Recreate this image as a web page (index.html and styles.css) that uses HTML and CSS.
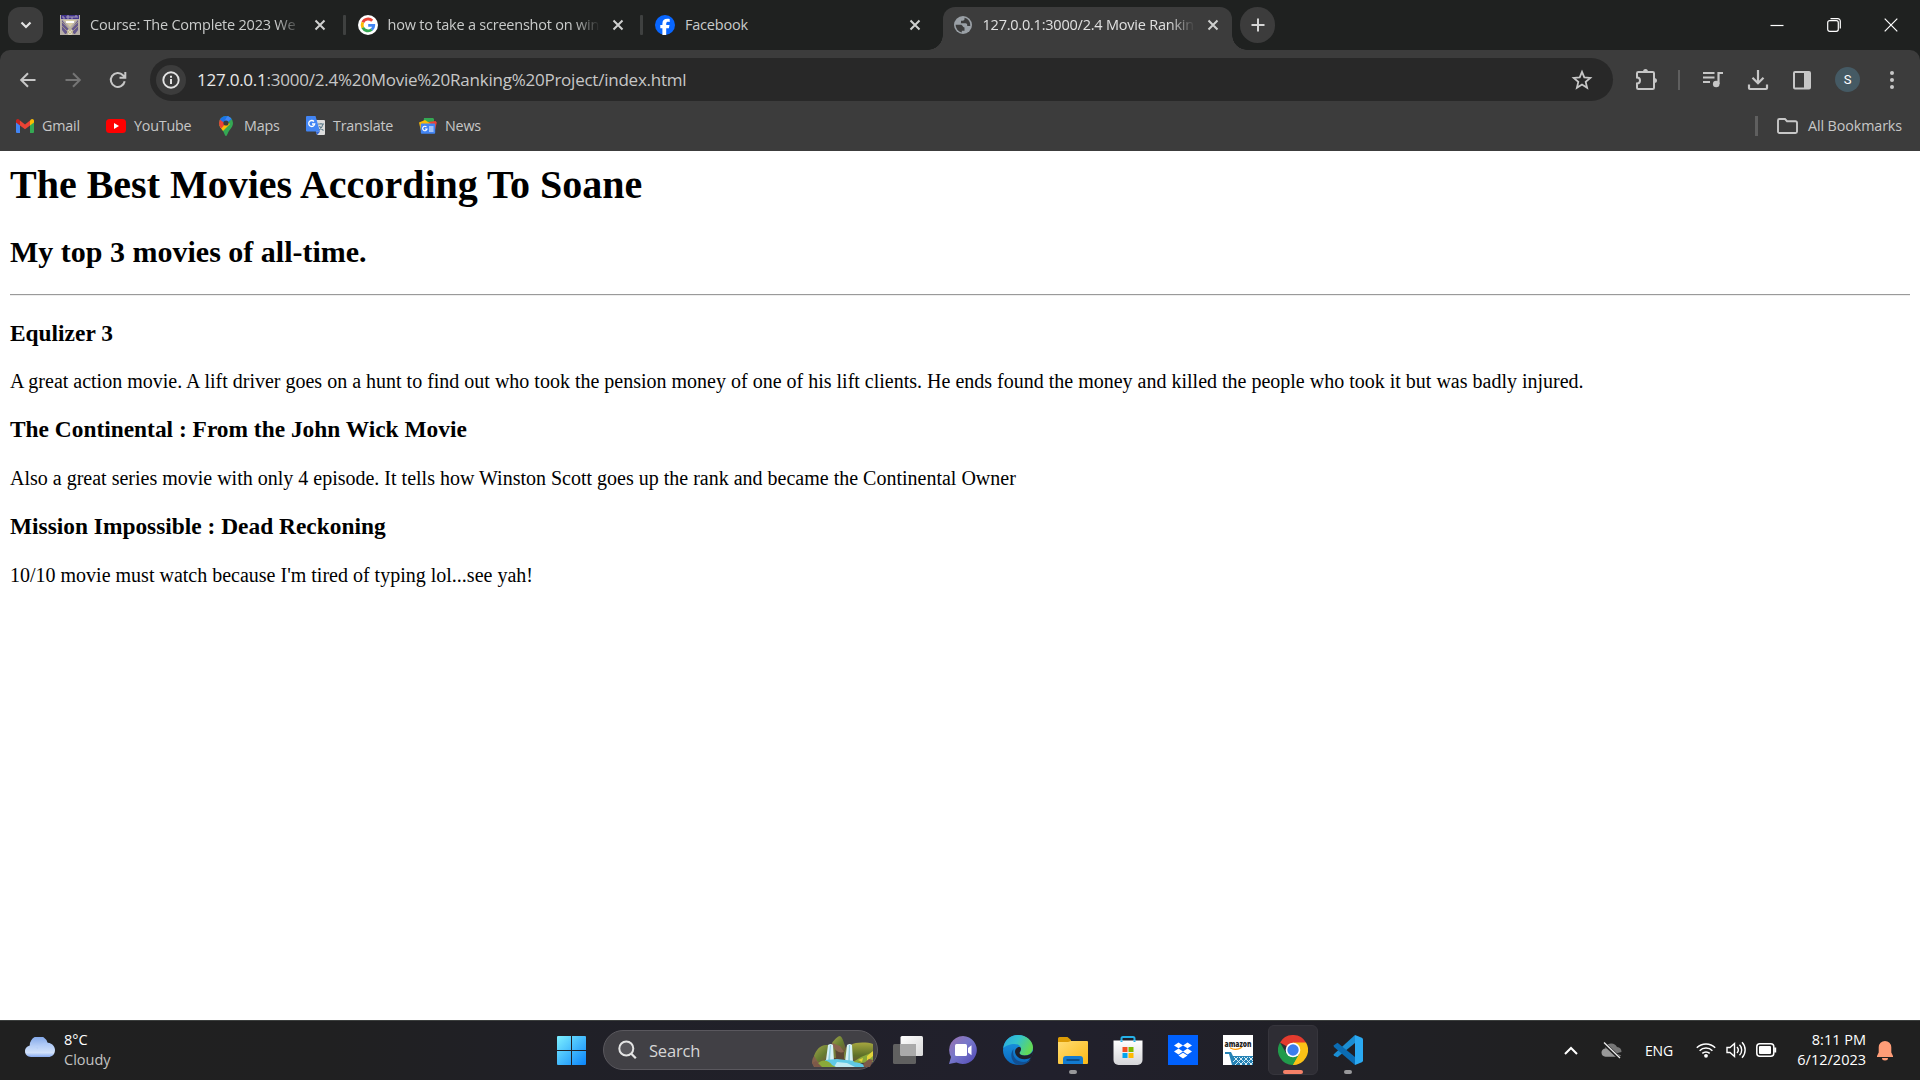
FILE: index.html
```html
<!DOCTYPE html>
<html lang="en">
<head>
<meta charset="utf-8">
<title>Movie Ranking Project</title>
<link rel="stylesheet" href="styles.css">
</head>
<body>
<div class="screen">
<header class="browser">
  <div class="tabstrip">
    <button class="tab-search"><svg width="14" height="14" viewBox="0 0 14 14"><path d="M2.500 4.500 7 9l4.500-4.500" fill="none" stroke="#e3e3e3" stroke-width="2.200"/></svg></button>
    <div class="tab">
      <svg class="fav" viewBox="0 0 20 20"><path fill="#b8b0a8" d="M0 0h20v20H0z"/><path fill="#43358c" d="M1 0h18v4H1z"/><path d="M3 1v2h2M7 1h2v2H7zM11 1v2h2V1M15 3V1h2v2" stroke="#aaa0bb" fill="none"/><path d="M2 5l7 9v5H5L2 15zM18 5l-7 9v5h4l3-4z" fill="#66598d"/><path d="M4 5h12l-6 7z" fill="#d7cda5"/><path d="M6 6h8v2H6z" fill="#fff"/><circle cx="10" cy="17" r="3" fill="#ded8bd"/><path d="M2 7l12 12M2 11l8 8M18 7 6 19M18 11l-8 8" stroke="#b4a982" stroke-width=".7"/></svg>
      <span class="tab-title fade">Course: The Complete 2023 We</span>
      <svg class="x" viewBox="0 0 12 12"><path d="M1.500 1.500l9 9M10.500 1.500l-9 9"/></svg>
    </div>
    <div class="tab">
      <svg class="fav" viewBox="0 0 20 20"><circle cx="10" cy="10" r="10" fill="#fff"/><g fill="none" stroke-width="2.900"><path d="M14.200 5.800A5.800 5.800 0 0 0 4.800 7.400" stroke="#ea4335"/><path d="M4.800 7.300a5.800 5.800 0 0 0 0 5.400" stroke="#fbbc05"/><path d="M4.800 12.600a5.800 5.800 0 0 0 9 1.900" stroke="#34a853"/><path d="M13.700 14.600c1.300-1.100 2-2.500 2-4.200H10.200" stroke="#4285f4"/></g></svg>
      <span class="tab-title fade">how to take a screenshot on win</span>
      <svg class="x" viewBox="0 0 12 12"><path d="M1.500 1.500l9 9M10.500 1.500l-9 9"/></svg>
    </div>
    <div class="tab last">
      <svg class="fav" viewBox="0 0 20 20"><circle cx="10" cy="10" r="10" fill="#0866ff"/><path fill="#fff" d="M7.400 20v-6.800H5.300v-3.100h2.100V8.800c0-3.500 1.600-5.100 5-5.100.7 0 1.800.1 2.300.3v2.900l-1.200-.1c-1.700 0-2.300.6-2.300 2.300v1h3.300l-.6 3.100h-2.700V20z"/></svg>
      <span class="tab-title">Facebook</span>
      <svg class="x" viewBox="0 0 12 12"><path d="M1.500 1.500l9 9M10.500 1.500l-9 9"/></svg>
    </div>
    <div class="tab active">
      <svg class="fav" viewBox="0 0 20 20"><circle cx="10" cy="10" r="9" fill="#9aa0a6"/><path d="M2.600 9.800h5.100c1.900 0 1.900 2.700 3.800 2.700v3.300H8.800v1.600A7.500 7.500 0 0 1 2.600 9.800z" fill="#3c3c3c"/><path d="M11.500 2.700V4c0 1-.8 1.700-1.800 1.700H8v1.700c0 .6-.4.900-1 .9h5.600c1 0 1.600.8 1.600 1.700v.9h3.100a7.500 7.500 0 0 0-5.800-8.200z" fill="#3c3c3c"/></svg>
      <span class="tab-title fade">127.0.0.1:3000/2.4 Movie Rankin</span>
      <svg class="x" viewBox="0 0 12 12"><path d="M1.500 1.500l9 9M10.500 1.500l-9 9"/></svg>
    </div>
    <button class="new-tab"><svg width="14" height="14" viewBox="0 0 14 14"><path d="M7 .5v13M.5 7h13" stroke="#d5d5d5" stroke-width="2"/></svg></button>
    <div class="window-controls">
      <svg viewBox="0 0 14 14"><path d="M.5 7.500h13"/></svg>
      <svg viewBox="0 0 14 14"><rect x=".7" y="2.700" width="10.600" height="10.600" rx="2"/><path d="M3.500.7h7.300a2.500 2.500 0 0 1 2.500 2.500v7.300"/></svg>
      <svg viewBox="0 0 14 14"><path d="M.7.7l12.600 12.600M13.300.7.7 13.300"/></svg>
    </div>
  </div>
  <div class="toolbar">
    <div class="nav">
      <svg viewBox="0 0 20 20"><path d="M17.500 10H4M10 3.200 3.200 10l6.800 6.800" stroke="#c7c7c7"/></svg>
      <svg viewBox="0 0 20 20"><path d="M2.500 10H16M10 3.200l6.800 6.800-6.800 6.800" stroke="#757575"/></svg>
      <svg viewBox="0 0 20 20"><path d="M16.700 11.300A7 7 0 1 1 15 5.200l2 2M17.300 2v5.800h-5.800" stroke="#c7c7c7"/></svg>
    </div>
    <div class="omnibox">
      <span class="site-info"><svg width="20" height="20" viewBox="0 0 20 20"><circle cx="10" cy="10" r="7.700" fill="none" stroke="#e3e3e3" stroke-width="1.900"/><path d="M10 9v5M10 5.700v2" stroke="#e3e3e3" stroke-width="2"/></svg></span>
      <span class="url"><b>127.0.0.1</b>:3000/2.4%20Movie%20Ranking%20Project/index.html</span>
      <svg class="star" width="22" height="22" viewBox="0 0 22 22"><path d="M11 2.800l2.300 5.600 6 .5-4.600 4 1.400 5.900-5.100-3.200-5.100 3.200 1.400-5.900-4.600-4 6-.5z" fill="none" stroke="#c7c7c7" stroke-width="1.800"/></svg>
    </div>
    <div class="actions">
      <svg class="puzzle" viewBox="0 0 24 24"><path d="M4.300 5h14.400a1.300 1.300 0 0 1 1.300 1.300v14.400a1.300 1.300 0 0 1-1.300 1.300H4.300A1.300 1.300 0 0 1 3 20.700v-4.200a3 3 0 0 0 0-6V6.300A1.300 1.300 0 0 1 4.300 5z" fill="none" stroke="#c7c7c7" stroke-width="2"/><path d="M9 5a2.500 3 0 0 1 5 0zM20 11a3 2.500 0 0 1 0 5z" fill="#c7c7c7"/></svg>
      <i class="rule"></i>
      <svg class="a-list" viewBox="0 0 24 24"><path d="M2 5h11.500M2 9.500h11.500M2 14h7" stroke="#c7c7c7" stroke-width="2"/><circle cx="15.200" cy="16" r="3.300" fill="#c7c7c7"/><path d="M17.500 16V5H22" fill="none" stroke="#c7c7c7" stroke-width="2.200"/></svg>
      <svg class="a-down" viewBox="0 0 24 24"><path d="M12 2v13M6.500 9.800l5.500 5.500 5.500-5.500M3 16.500V20c0 .7.400 1 1 1h16c.6 0 1-.3 1-1v-3.500" fill="none" stroke="#c7c7c7" stroke-width="2.200"/></svg>
      <svg class="a-side" viewBox="0 0 24 24"><rect x="4" y="4" width="16" height="16.500" rx="1" fill="none" stroke="#c7c7c7" stroke-width="2"/><path fill="#c7c7c7" d="M14 4h6v16h-6z"/></svg>
      <span class="avatar">S</span>
      <svg class="a-dots" viewBox="0 0 24 24" fill="#c7c7c7"><circle cx="12" cy="5" r="2"/><circle cx="12" cy="12" r="2"/><circle cx="12" cy="19" r="2"/></svg>
    </div>
  </div>
  <div class="bookmarks">
    <a class="bm gmail"><svg width="18" height="14" viewBox="0 0 18 14"><path fill="#4285f4" d="M0 3h4v11H1a1 1 0 0 1-1-1z"/><path fill="#34a853" d="M14 3h4v10a1 1 0 0 1-1 1h-3z"/><path fill="#ea4335" d="M4 1.500 9 5.400l5-3.900v5L9 10.300 4 6.500z"/><path fill="#c5221f" d="M0 2C0 .2 2-.5 3.300.7L4 1.400v5.100L0 3.600z"/><path fill="#fbbc04" d="M18 2c0-1.800-2-2.500-3.300-1.300l-.7.7v5.100l4-2.900z"/></svg><span>Gmail</span></a>
    <a class="bm youtube"><svg width="20" height="14" viewBox="0 0 20 14"><rect width="20" height="14" rx="3.500" fill="#f00"/><path fill="#fff" d="M8 4v6l5-3z"/></svg><span>YouTube</span></a>
    <a class="bm maps"><svg width="14" height="20" viewBox="0 0 14 20"><clipPath id="pin"><path d="M7 0a7 7 0 0 1 7 7c0 3-1.500 4.500-3.500 7.300C8.500 17 8.300 20 7 20s-1.500-3-3.500-5.700C1.500 11.500 0 10 0 7a7 7 0 0 1 7-7z"/></clipPath><g clip-path="url(#pin)"><path fill="#34a853" d="M0 0h14v20H0z"/><path fill="#fbbc04" d="M0 10 5 4l6 4-8 8z"/><path fill="#ea4335" d="M0 1 7 7l-5.500 6.500L0 12z"/><path fill="#1a73e8" d="M0 3 3-1h6l4 4-6 5z"/><path fill="#4285f4" d="M8 7l4.500-5L9-1 5 6z"/></g><circle cx="7" cy="7" r="2.600" fill="#3c3c3c"/></svg><span>Maps</span></a>
    <a class="bm translate"><svg width="20" height="20" viewBox="0 0 20 20"><path fill="#ddd" d="M7 4h11a1 1 0 0 1 1 1v13a1 1 0 0 1-1 1h-7z"/><path d="M12 8h6M15 7v1M17 8c-.5 3-2 4.500-4 6M13.500 10c.8 2 2 3.500 4 4.500" fill="none" stroke="#607d8b" stroke-width="1.200"/><path fill="#4285f4" d="M1 0h8.500L14 15.500H1a1 1 0 0 1-1-1V1a1 1 0 0 1 1-1z"/><path fill="#3367d6" d="M9.500 15.500H14L11.200 19z"/><path d="M8 5.500a3 3 0 1 0 .7 2.500H6" fill="none" stroke="#fff" stroke-width="1.300"/></svg><span>Translate</span></a>
    <a class="bm news"><svg width="18" height="16" viewBox="0 0 18 16"><path fill="#34a853" d="M5 0h9l1 1v8H4z"/><path fill="#ea4335" d="M9 4l7.500-1 1.300 1.500L16 12H9z"/><path fill="#fbbc04" d="M0 4.500 6 2l6 4-8 7H2z"/><path fill="#4285f4" d="M2.800 5.500h12.400a1 1 0 0 1 1 1v8.300a1 1 0 0 1-1 1H2.800a1 1 0 0 1-1-1V6.500a1 1 0 0 1 1-1z"/><path d="M7.500 9a2.200 2.200 0 1 0 .5 2H6M10 9h4.500M10 11h4.500M10 13h4.500" fill="none" stroke="#fff" stroke-width="1.100"/></svg><span>News</span></a>
    <i class="rule"></i>
    <a class="bm all"><svg width="21" height="16" viewBox="0 0 21 16"><path d="M2.500 1H8l2 2.200h8.500A1.500 1.500 0 0 1 20 4.700v8.800a1.500 1.500 0 0 1-1.500 1.500h-16A1.500 1.500 0 0 1 1 13.500v-11A1.500 1.500 0 0 1 2.500 1z" fill="none" stroke="#c7c7c7" stroke-width="1.900"/></svg><span>All Bookmarks</span></a>
  </div>
</header>

<main class="page">
  <h1>The Best Movies According To Soane</h1>
  <h2>My top 3 movies of all-time.</h2>
  <hr>
  <h3>Equlizer 3</h3>
  <p>A great action movie. A lift driver goes on a hunt to find out who took the pension money of one of his lift clients. He ends found the money and killed the people who took it but was badly injured.</p>
  <h3>The Continental : From the John Wick Movie</h3>
  <p>Also a great series movie with only 4 episode. It tells how Winston Scott goes up the rank and became the Continental Owner</p>
  <h3>Mission Impossible : Dead Reckoning</h3>
  <p>10/10 movie must watch because I'm tired of typing lol...see yah!</p>
</main>

<footer class="taskbar">
  <div class="weather">
    <svg width="30" height="20" viewBox="0 0 30 20"><defs><linearGradient id="cl" x2="0" y2="1"><stop stop-color="#7fa5e8"/><stop offset=".5" stop-color="#b9d0f7"/><stop offset="1" stop-color="#a5c2f5"/></linearGradient><linearGradient id="cl2" x2="0" y2="1"><stop stop-color="#a6c3f5"/><stop offset=".7" stop-color="#d2e2fb"/><stop offset="1" stop-color="#86aaf0"/></linearGradient></defs><path fill="url(#cl)" d="M5 10a9 9 0 0 1 17.800-3.800A7 7 0 0 1 23 20H13z"/><path fill="url(#cl2)" d="M6 8.500c3 0 5 1 6.500 3.500C14 8 17.500 5.500 21 5.500c5 0 9 3 9 7.500s-3 7-7 7H6c-3.500 0-6-2.500-6-5.700C0 11 2.500 8.500 6 8.500z"/></svg>
    <div><div class="temp">8°C</div><div class="cond">Cloudy</div></div>
  </div>
  <div class="dock">
    <svg class="start" width="29" height="29" viewBox="0 0 29 29"><linearGradient id="win" x2="1" y2="1"><stop stop-color="#7df0ff"/><stop offset="1" stop-color="#0a84fa"/></linearGradient><path fill="url(#win)" d="M1 0h13v14H0V1a1 1 0 0 1 1-1zM15 0h13a1 1 0 0 1 1 1v13H15zM0 15h14v14H1a1 1 0 0 1-1-1zM15 15h14v13a1 1 0 0 1-1 1H15z"/></svg>
    <div class="search">
      <svg width="19" height="20" viewBox="0 0 19 20"><circle cx="8.300" cy="8.500" r="7" fill="#58575c" stroke="#e4e4e4" stroke-width="2"/><path d="M13.300 13.700l4.500 4.500" stroke="#e4e4e4" stroke-width="2.300"/></svg>
      <span>Search</span>
      <svg class="scene" width="62" height="31" viewBox="0 0 62 31"><defs><linearGradient id="hl" x2="1" y2="1"><stop stop-color="#a3a64a"/><stop offset=".55" stop-color="#677d31"/><stop offset="1" stop-color="#70503e"/></linearGradient><linearGradient id="hr" x2="0" y2="1"><stop stop-color="#a5a63f"/><stop offset=".6" stop-color="#5d7028"/><stop offset="1" stop-color="#6e4c3c"/></linearGradient></defs><path fill="#85624c" d="M0 27C0 20 4 17 10 15l6 9v7H2z"/><path fill="url(#hl)" d="M2 20C4 14 8 9 14 9l5 0v14c-4 1-8 3-13 3z"/><path fill="#5b4634" d="M19 12h18v13H19z"/><path fill="#78803a" d="M17 9q3-2 6 0l1 13h-4zM32 17q2-8 6-9l-2 15h-4z"/><path fill="url(#hl)" d="M20 7C23 3 26 0 28 0c2 1 3 4 4 7l2 6c-3 4-6 4-9 2l-5-4z"/><path fill="#8b6550" d="M20 7l8 3 4 6c-3 1-6 0-8-2l-4-4z"/><path fill="url(#hr)" d="M39 9c4-3 16-3 22-1v14l-13 6-9-5z"/><path fill="#d6f1f5" d="M16 9q3-2 5 0l1 16-8-1zM35 9q3-2 5 0l1 17h-8z"/><path fill="#8fd0e0" d="M18 9h1l-1 16h-2zM37 9h1v17h-2z"/><path fill="#5fc9e6" d="M13 24l12-1 18 2 14 6H14z"/><path fill="#bfeaf2" d="M25 26l10 1 8 4H22z"/><path fill="#8aa93a" d="M5 29c3-6 11-6 15 0l4 2H5zM41 26l8-5 12-5v10l-12 1z"/><path fill="#e2d33a" d="M55 20l6-5v5l-6 5zM46 24l5-2-1 4z"/><path fill="#7d5949" d="M0 27l4-2 6 6H3zM51 28l6-5 4 1-3 7h-6z"/></svg>
    </div>
    <div class="app"><svg width="30" height="28" viewBox="0 0 30 28"><linearGradient id="tv" x2="1" y2="1"><stop stop-color="#fff"/><stop offset="1" stop-color="#d8d8d8"/></linearGradient><rect x="0" y="8" width="23" height="20" rx="1.500" fill="#606060"/><rect x="7.500" y="0" width="22.500" height="20" rx="1.500" fill="url(#tv)"/><path fill="#aaa" d="M7.500 8H23v12H8.500a1 1 0 0 1-1-1z"/></svg></div>
    <div class="app"><svg width="30" height="30" viewBox="0 0 30 30"><linearGradient id="ch" x2="1" y2="1"><stop stop-color="#9c70ad"/><stop offset=".45" stop-color="#7778cb"/><stop offset="1" stop-color="#5148b5"/></linearGradient><path fill="url(#ch)" d="M15 1a14 14 0 1 1-6.500 26.500L1 29l2-7A14 14 0 0 1 15 1z"/><rect x="7" y="9" width="12" height="12" rx="1.500" fill="#fff"/><path fill="#fff" d="M20 13l3.500-2.800v10L20 17.500z"/></svg></div>
    <div class="app"><svg width="30" height="30" viewBox="0 0 30 30"><defs><linearGradient id="ed1" x2="1" y2=".4"><stop stop-color="#2aa7df"/><stop offset=".5" stop-color="#33c3ce"/><stop offset="1" stop-color="#62d957"/></linearGradient><linearGradient id="ed2" x2="0" y2="1"><stop stop-color="#1d9de5"/><stop offset="1" stop-color="#0a67be"/></linearGradient></defs><circle cx="15" cy="15" r="15" fill="url(#ed2)"/><path fill="url(#ed1)" d="M.3 13C1.500 5 7.500 0 15 0c8.500 0 15 6 15 12.500 0 5-3.800 8-8.500 8-3 0-5-1-5-2.500 0-1 1.500-1.500 1.500-4 0-3-2.500-5-6.500-5C7 9 2.500 11 .3 13z"/><path fill="#124f91" d="M10.500 14c-2 8 3.500 13 10 13 3 0 5-.8 7.500-2.500A15 15 0 0 1 15 30C9 28 6 20 10.500 14z"/><path fill="#20202a" d="M18 14c0 2.500-1.500 3-1.500 4 0 1.500 2 2.500 5 2.500 4 0 6.500-1.500 8.500-4.500 0 3-.5 5-1.800 6.500C22 26 13 24 12 17c0-3 2-5 4.500-5 1 0 1.500 1 1.500 2z"/></svg></div>
    <div class="app open"><svg width="30" height="27" viewBox="0 0 30 27"><linearGradient id="fo" x2="1" y2="1"><stop stop-color="#ffdc73"/><stop offset="1" stop-color="#fcb915"/></linearGradient><path fill="#dc9b06" d="M0 1.500A1.500 1.500 0 0 1 1.500 0h8L13 3v5H0z"/><path fill="url(#fo)" d="M0 5h10l3-1h16a1 1 0 0 1 1 1v21a1 1 0 0 1-1 1H1a1 1 0 0 1-1-1z"/><path fill="#137bd0" d="M5 27v-5a3 3 0 0 1 3-3h14a3 3 0 0 1 3 3v5z"/><path stroke="#0a3f73" stroke-width="1.500" d="M8.500 23h13"/></svg></div>
    <div class="app"><svg width="30" height="30" viewBox="0 0 30 30"><linearGradient id="st" x2="0" y2="1"><stop stop-color="#fff"/><stop offset="1" stop-color="#d5d5d8"/></linearGradient><path d="M8.500 7V3.500A1.500 1.500 0 0 1 10 2h10a1.500 1.500 0 0 1 1.500 1.500V7" fill="none" stroke="#25b1e8" stroke-width="2"/><path fill="url(#st)" d="M.5 5.500h29V25a5 5 0 0 1-5 5h-19a5 5 0 0 1-5-5z"/><path fill="#f25022" d="M9.500 12h5v5h-5z"/><path fill="#7fba00" d="M15.500 12h5v5h-5z"/><path fill="#00a4ef" d="M9.500 18h5v5h-5z"/><path fill="#ffb900" d="M15.500 18h5v5h-5z"/><path d="M8.500 7V5.500M21.500 7V5.500" stroke="#25b1e8" stroke-width="2"/></svg></div>
    <div class="app"><svg width="30" height="30" viewBox="0 0 30 30"><path fill="#0061fe" d="M0 0h30v30H0z"/><path fill="#fff" d="M10.500 7.500 15 10.400l-4.500 2.900L6 10.400zM19.500 7.500l4.500 2.900-4.500 2.900-4.500-2.900zM10.500 13.600l4.500 2.900-4.500 2.900L6 16.500zM19.500 13.600l4.500 2.900-4.500 2.900-4.500-2.900zM15 17.700l4.500 2.900-4.500 2.800-4.500-2.800z"/></svg></div>
    <div class="app"><svg width="30" height="30" viewBox="0 0 30 30"><path fill="#fff" d="M0 0h30v30H0z"/><text x="1.500" y="12" class="amazon" textLength="27" lengthAdjust="spacingAndGlyphs">amazon</text><path d="M7 12.800q6 3.500 12-.5" fill="none" stroke="#f90" stroke-width="1.200"/><path fill="#2482b5" d="M2 17h6l2 4h20v9H9L6 19H2z"/><path d="M11 22l8 8M16 22l8 8M21 22l8 8M26 22l4 4M15 22l-5 5M20 22l-8 8M25 22l-8 8M30 22l-8 8M30 27l-3 3" stroke="#d5edf7" stroke-width="1"/></svg></div>
    <div class="app current"><svg width="30" height="30" viewBox="0 0 30 30"><path fill="#e33b2e" d="M15 15 2 7.500A15 15 0 0 1 28 7.500z"/><path fill="#fbc116" d="M15 15V7.500h13A15 15 0 0 1 15 30z"/><path fill="#219b4b" d="M2 7.500 8.500 18.800 21.500 18.800 15 30A15 15 0 0 1 2 7.500z"/><path fill="#fbc116" d="M21.500 18.800 15 30a15 15 0 0 0 6-1.500z"/><circle cx="15" cy="15" r="7.300" fill="#fff"/><circle cx="15" cy="15" r="5.700" fill="#3b7ded"/></svg></div>
    <div class="app open"><svg width="30" height="30" viewBox="0 0 30 30"><path fill="#1b8ed3" d="M.5 19.500 22 0v8L4.500 22.200 1 20.800z"/><path fill="#0b6cb3" d="M.5 10.500 4.500 7.800 22 22v8L1 12z"/><path fill="#2aa9f2" d="M22 0l6.800 2.800A2 2 0 0 1 30 4.600v20.800a2 2 0 0 1-1.200 1.800L22 30z"/></svg></div>
  </div>
  <div class="tray">
    <svg class="t-up" width="14" height="9" viewBox="0 0 14 9"><path d="M1 8l6-6 6 6" fill="none" stroke="#fff" stroke-width="2"/></svg>
    <svg class="t-cloud" width="21" height="17" viewBox="0 0 21 17"><path fill="#777" d="M4 6a6.500 6.500 0 0 1 12-1 5 5 0 0 1 4.500 5L9 13z"/><path fill="#999" d="M4.500 6.500c2 0 3 .5 5 2l10.500 5c-.8.900-1.500 1.200-2.500 1.200h-13C2 14.700.5 12.800.5 10.500s1.700-4 4-4z"/><path d="M2 .5 19 16.500" stroke="#202020" stroke-width="3.500"/><path d="M3 .5 19 16" stroke="#eee" stroke-width="1.300"/></svg>
    <span class="lang">ENG</span>
    <svg class="t-wifi" width="20" height="16" viewBox="0 0 20 16"><g fill="none" stroke="#fff" stroke-width="1.500"><path d="M.8 5.800a13 13 0 0 1 18.400 0M3.600 8.700a9 9 0 0 1 12.800 0M6.300 11.400a5.300 5.300 0 0 1 7.400 0"/></g><circle cx="10" cy="13.800" r="1.900" fill="#fff"/></svg>
    <svg class="t-vol" width="21" height="18" viewBox="0 0 21 18"><g fill="none" stroke="#fff" stroke-width="1.400"><path d="M1 6.500h3L8.500 2.500v13L4 11.500H1z"/><path d="M11 6a4.500 4.500 0 0 1 0 6M13.500 3.700a7.500 7.500 0 0 1 0 10.600M16 1.300a11 11 0 0 1 0 15.400"/></g></svg>
    <svg class="t-bat" width="21" height="14" viewBox="0 0 21 14"><rect x=".8" y=".8" width="17" height="12.400" rx="3" fill="none" stroke="#fff" stroke-width="1.500"/><rect x="3" y="3" width="12" height="8" rx="1" fill="#fff"/><path d="M19.200 4.500v5" stroke="#fff" stroke-width="2"/></svg>
    <div class="clock"><div class="time">8:11 PM</div><div class="date">6/12/2023</div></div>
    <svg class="t-bell" width="16" height="20" viewBox="0 0 16 20"><path fill="#ff9d77" d="M8 0a6.300 6.300 0 0 1 6.300 6.300v5.200L16 15v1H0v-1l1.700-3.500V6.300A6.300 6.300 0 0 1 8 0zM5 17h6a3 2.500 0 0 1-6 0z"/></svg>
  </div>
</footer>
</div>
</body>
</html>
```
FILE: styles.css
```css
* { box-sizing: border-box; }
body { margin: 0; background: #fff; }
button { border: 0; padding: 0; font: inherit; }
svg { display: block; flex: none; }
.screen {
  width: 1920px; height: 1080px; overflow: hidden;
  display: grid; grid-template-rows: 151px 1fr 60px;
  font-family: "Open Sans", "Noto Sans", sans-serif;
}

/* browser chrome */
.browser { background: #1f2120; display: grid; grid-template-rows: 50px 59px 42px; grid-template-columns: 1920px; }
.tabstrip { display: flex; padding: 7px 0 0 8px; }
.tab-search { width: 35px; height: 36px; border-radius: 12px; background: #3c3c3c; display: grid; place-items: center; margin-right: 5px; }
.tab { width: 297.500px; height: 36px; padding: 0 0 0 12px; display: flex; align-items: center; position: relative; color: #c9cbca; font-size: 14.500px; }
.tab:not(.last):not(.active)::after { content: ""; position: absolute; right: 0; top: 8px; width: 3px; height: 20px; border-radius: 1px; background: #3f4140; }
.fav { width: 20px; height: 20px; margin-right: 10px; }
.tab-title { width: 212px; overflow: hidden; white-space: nowrap; line-height: 22px; letter-spacing: -.22px; }
.fade { -webkit-mask-image: linear-gradient(90deg, #000 88%, transparent 100%); mask-image: linear-gradient(90deg, #000 88%, transparent 100%); }
.x { width: 12px; height: 12px; margin-left: 12px; fill: none; stroke: #cfd0cf; stroke-width: 2; }
.tab.last { width: 299.500px; }
.tab.active { width: 289px; height: 43px; padding: 0 0 7px 10px; background: #3c3c3c; border-radius: 12px 12px 0 0; color: #e0e0e0; }
.tab.active::before, .tab.active::after { content: ""; position: absolute; bottom: 0; width: 15px; height: 15px; }
.tab.active::before { left: -15px; background: radial-gradient(circle at 0 0, transparent 14.500px, #3c3c3c 15px); }
.tab.active::after { right: -15px; background: radial-gradient(circle at 100% 0, transparent 14.500px, #3c3c3c 15px); }
.new-tab { width: 35px; height: 36px; border-radius: 18px; background: #3c3c3c; display: grid; place-items: center; margin-left: 8px; z-index: 1; }
.new-tab svg { margin-left: 1px; }
.window-controls { margin-left: auto; display: flex; gap: 43px; padding: 11px 22px 0 0; }
.window-controls svg { width: 14px; height: 14px; fill: none; stroke: #fff; stroke-width: 1.200; }

.toolbar { display: flex; height: 59px; padding-top: 8px; background: #3c3c3c; border-radius: 10px 10px 0 0; }
.nav { width: 150px; padding-left: 18px; height: 43px; display: flex; align-items: center; gap: 25px; }
.nav svg { width: 20px; height: 20px; fill: none; stroke-width: 2; }
.omnibox { width: 1463px; height: 43px; border-radius: 22px; background: #282828; display: flex; align-items: center; padding: 0 20px 0 6px; }
.site-info { width: 30px; height: 30px; border-radius: 50%; background: #3c3c3c; display: grid; place-items: center; margin-right: 11px; }
.url { font-size: 17px; line-height: 24px; color: #c7c7c7; white-space: nowrap; letter-spacing: -.24px; }
.url b { font-weight: 400; color: #e8e8e8; }
.star { margin-left: auto; }
.actions { display: flex; align-items: center; height: 43px; }
.actions svg { width: 24px; height: 24px; }
.puzzle { margin-left: 21px; margin-top: -2px; }
.rule { width: 2px; height: 20px; background: #5f5f5f; }
.actions .rule { margin-left: 20px; }
.a-list { margin-left: 21px; }
.a-down { margin-left: 20.500px; }
.a-side { margin-left: 20.500px; }
.avatar { width: 25px; height: 25px; border-radius: 50%; background: #455a64; color: #fff; display: grid; place-items: center; font: 13px Roboto, sans-serif; margin-left: 21px; }
.a-dots { margin-left: 20px; }
.bookmarks { background: #3c3c3c; display: flex; align-items: center; height: 42px; padding: 0 18px 8px 16px; font-size: 14.300px; color: #c7c7c7; letter-spacing: -.2px; }
.bm { display: flex; align-items: center; height: 22px; white-space: nowrap; }
.bm span { margin-top: -2px; }
.gmail { width: 90px; gap: 8px; }
.youtube { width: 113px; gap: 8px; }
.maps { width: 87px; gap: 11px; }
.translate { width: 113px; gap: 7px; }
.news { gap: 8px; }
.bookmarks .rule { margin-left: auto; width: 3px; }
.all { gap: 10px; margin-left: 19px; }
.all span { letter-spacing: -.1px; }

/* web page */
.page { background: #fff; color: #000; padding: 11px 10px 0; font: 20px/23px "Liberation Serif", "Times New Roman", serif; white-space: nowrap; }
.page h1 { font-size: 40px; line-height: 46px; margin: 0 0 26.800px; }
.page h2 { font-size: 30px; line-height: 34px; margin: 0 0 25.500px; }
.page hr { border: 0; height: 2px; background: linear-gradient(#9a9a9a 50%, #eee 50%); margin: 0 0 23.400px; }
.page h3 { font-size: 23.400px; line-height: 27px; margin: 0 0 23.400px; }
.page p { margin: 0 0 23.400px; }

/* taskbar */
.taskbar { border-top: 1px solid #3b3e3d; background: linear-gradient(90deg, #202020 0, #202021 330px, #202027 560px, #21202c 1050px, #202025 1380px, #202020 1600px); display: flex; color: #fff; }
.weather { width: 557px; padding: 9px 0 0 25px; display: flex; font-size: 14.500px; line-height: 20px; }
.weather svg { margin: 7px 9px 0 0; }
.cond { color: #c3c3c3; }
.dock { display: flex; align-items: center; height: 58px; }
.search { width: 275px; height: 40px; margin: 0 2px 0 17px; border-radius: 20px; border: 1px solid #5a585e; background: #414045; display: flex; align-items: center; padding: 0 3px 0 14px; font-size: 16.500px; color: #d6d6d6; letter-spacing: -.2px; }
.search span { margin-left: 12px; }
.scene { margin: 3px 0 0 auto; }
.app { width: 50px; height: 50px; margin: 0 2.500px; border-radius: 6px; display: grid; place-items: center; position: relative; }
.app.current { background: #2e2d34; border: 1px solid #36353c; }
.app.open::after, .app.current::after { content: ""; position: absolute; bottom: 1px; left: 21px; width: 8px; height: 4px; border-radius: 2px; background: #98989b; }
.app.current::after { width: 20px; left: 14px; bottom: 0; background: #f58168; }
.amazon { font: 800 8px "Open Sans", sans-serif; fill: #222; }
.tray { display: flex; align-items: center; height: 58px; margin-left: auto; padding-right: 27px; font-size: 14.500px; }
.t-cloud { margin-left: 23px; }
.lang { margin-left: 23px; font-size: 14px; width: 30px; letter-spacing: -.2px; }
.t-wifi { margin-left: 21px; }
.t-vol { margin-left: 10px; }
.t-bat { margin-left: 9px; }
.clock { margin-left: 19px; text-align: right; line-height: 20px; width: 70px; white-space: nowrap; letter-spacing: 0; }
.t-bell { margin: 1px 0 0 11px; }
```
